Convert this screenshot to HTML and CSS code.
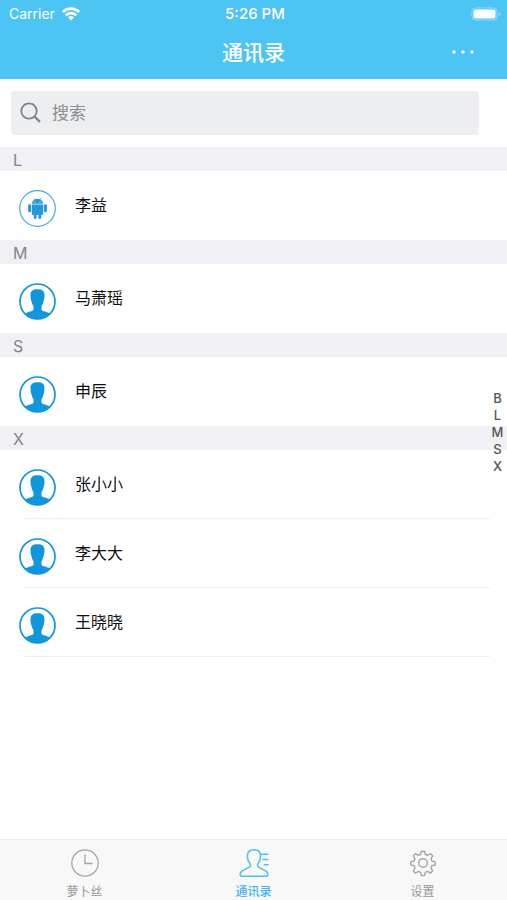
FILE: index.html
```html
<!DOCTYPE html>
<html lang="zh-CN">
<head>
<meta charset="utf-8">
<meta name="viewport" content="width=device-width, initial-scale=1">
<title>通讯录</title>
<link rel="stylesheet" href="styles.css">
</head>
<body>
<svg class="sprite" aria-hidden="true">
  <symbol id="person" viewBox="0 0 37 37">
    <circle cx="18.500" cy="18.500" r="17.500" fill="#fff" stroke="#1296db" stroke-width="1.700"/>
    <path fill="#1296db" d="M18.500 6.200c-4.800 0-7 1.800-7 5.800 0 1.500.1 2.700.3 4 .2 1 .3 1.700.7 2.300.3 1.900 1 3.600 2 4.900v3c-.1 1.200-1 1.700-2.400 2.100-2.600.7-5 1.400-6.600 2.700C8.800 34.400 13.400 36.200 18.500 36.200s9.700-1.800 13-5.200c-1.600-1.300-4-2-6.600-2.700-1.400-.4-2.300-.9-2.400-2.100v-3c1-1.300 1.700-3 2-4.900.4-.6.5-1.300.7-2.300.2-1.300.3-2.500.3-4 0-4-2.200-5.800-7-5.800z"/>
  </symbol>
</svg>
<div class="app">
  <header class="header">
    <div class="status">
      <div class="carrier">
        <span>Carrier</span>
        <svg width="18" height="14" viewBox="0 0 18 14" fill="none" stroke="#fff" stroke-width="2.600" aria-hidden="true">
          <path d="M.8 5a11.600 11.600 0 0 1 16.400 0M3.700 8.300a7.500 7.500 0 0 1 10.600 0"/>
          <path d="M9 13.500l-2.900-3a4.100 4.100 0 0 1 5.800 0z" fill="#fff" stroke="none"/>
        </svg>
      </div>
      <time class="clock">5:26 PM</time>
      <svg class="battery" width="30" height="14" viewBox="0 0 30 14" aria-hidden="true">
        <rect x="1" y="1" width="25" height="12" rx="3.500" fill="none" stroke="#fff" stroke-opacity=".4"/>
        <rect x="2.500" y="2.500" width="22" height="9" rx="2" fill="#fff"/>
        <path d="M28 5v4q1.500-.6 1.500-2T28 5z" fill="#fff" fill-opacity=".4"/>
      </svg>
    </div>
    <div class="navbar">
      <h1 class="title">通讯录</h1>
      <button class="more" type="button" aria-label="更多">
        <svg width="24" height="6" viewBox="0 0 24 6" fill="#fff" aria-hidden="true"><circle cx="3" cy="3" r="1.700"/><circle cx="12" cy="3" r="1.700"/><circle cx="21" cy="3" r="1.700"/></svg>
      </button>
    </div>
  </header>

  <main class="content">
    <label class="search">
      <svg width="22" height="22" viewBox="0 0 22 22" fill="none" stroke="#808286" aria-hidden="true">
        <circle cx="9" cy="9" r="7.700" stroke-width="1.800"/><path d="M14.500 14.500l5.500 5.500" stroke-width="2.300"/>
      </svg>
      <input type="search" placeholder="搜索" aria-label="搜索">
    </label>

    <section>
      <h2 class="letter" id="L">L</h2>
      <ul class="contacts">
        <li class="contact">
          <svg class="avatar" viewBox="0 0 37 37" aria-hidden="true">
            <circle cx="18.500" cy="18.500" r="17.800" fill="#fff" stroke="#46a9df" stroke-width="1.200"/>
            <g fill="#2498db">
              <path d="M13 13.700c.1-2.200 1-3.400 2.700-4.200l-.8-1.300.4-.2.900 1.300c1.500-.5 3.100-.5 4.600 0l.9-1.300.4.200-.8 1.300c1.700.8 2.600 2 2.700 4.200z"/>
              <path d="M12.800 14.400h11.400v9.400q0 1.200-1.200 1.200h-.8v2.700a1.400 1.400 0 0 1-2.800 0V25h-1.800v2.700a1.400 1.400 0 0 1-2.800 0V25H14q-1.200 0-1.200-1.200z"/>
              <rect x="9.100" y="14.300" width="3" height="8" rx="1.400"/>
              <rect x="24.900" y="14.300" width="3" height="8" rx="1.400"/>
            </g>
            <circle cx="16" cy="11.800" r=".6" fill="#fff"/><circle cx="21" cy="11.800" r=".6" fill="#fff"/>
          </svg>
          <span class="name">李益</span>
        </li>
      </ul>
    </section>
    <section>
      <h2 class="letter" id="M">M</h2>
      <ul class="contacts">
        <li class="contact"><svg class="avatar" aria-hidden="true"><use href="#person"/></svg><span class="name">马萧瑶</span></li>
      </ul>
    </section>
    <section>
      <h2 class="letter" id="S">S</h2>
      <ul class="contacts">
        <li class="contact"><svg class="avatar" aria-hidden="true"><use href="#person"/></svg><span class="name">申辰</span></li>
      </ul>
    </section>
    <section>
      <h2 class="letter" id="X">X</h2>
      <ul class="contacts divided">
        <li class="contact"><svg class="avatar" aria-hidden="true"><use href="#person"/></svg><span class="name">张小小</span></li>
        <li class="contact"><svg class="avatar" aria-hidden="true"><use href="#person"/></svg><span class="name">李大大</span></li>
        <li class="contact"><svg class="avatar" aria-hidden="true"><use href="#person"/></svg><span class="name">王晓晓</span></li>
      </ul>
    </section>
  </main>

  <nav class="index" aria-label="字母索引">
    <a href="#B">B</a><a href="#L">L</a><a href="#M">M</a><a href="#S">S</a><a href="#X">X</a>
  </nav>

  <nav class="tabs">
    <a class="tab" href="#recent">
      <svg width="30" height="30" viewBox="0 0 30 30" fill="none" stroke="#a3a5a7" stroke-width="1.300" aria-hidden="true"><circle cx="15" cy="15" r="13.200"/><path d="M15 6.500V15.500h7.500"/></svg>
      <span>萝卜丝</span>
    </a>
    <a class="tab active" href="#contacts" aria-current="page">
      <svg width="30" height="30" viewBox="0 0 30 30" fill="none" stroke="#4fbdf0" stroke-width="1.500" stroke-linecap="round" stroke-linejoin="round" aria-hidden="true">
        <path d="M15 1.700c-4.200 0-6.600 2.600-6.600 6.600 0 3 .9 5.400 2.500 7.100 1 1.200.9 2.600-.4 3.500-2.200 1.600-5 2.600-7.500 4.300-1.500 1-2 2-1.900 3.500.1 1 .7 1.500 1.700 1.500h24.400c1 0 1.600-.5 1.700-1.500.1-1.500-.4-2.500-1.900-3.500-2.500-1.700-5.300-2.700-7.500-4.300-1.300-.9-1.400-2.300-.4-3.500 1.600-1.700 2.500-4.100 2.500-7.100 0-4-2.400-6.600-6.600-6.600z"/>
        <path d="M22.500 6.200h6.300M24 11.500h4.800M25.500 16.800h3.300"/>
      </svg>
      <span>通讯录</span>
    </a>
    <a class="tab" href="#settings">
      <svg width="30" height="30" viewBox="0 0 30 30" fill="none" stroke="#a3a5a7" stroke-width="1.400" stroke-linejoin="round" aria-hidden="true">
        <circle cx="15" cy="15" r="4.300"/>
        <path d="M12.600 6.500 13.500 3.200h3l.9 3.300 2.200.9 3-1.700 2.100 2.100-1.700 3 .9 2.200 3.300.9v3l-3.300.9-.9 2.200 1.700 3-2.100 2.100-3-1.700-2.200.9-.9 3.300h-3l-.9-3.300-2.200-.9-3 1.700-2.100-2.100 1.700-3-.9-2.200-3.300-.9v-3l3.300-.9.9-2.200-1.700-3 2.100-2.100 3 1.700z"/>
      </svg>
      <span>设置</span>
    </a>
  </nav>
</div>
</body>
</html>
```
FILE: styles.css
```css
* { box-sizing: border-box; }

body {
  margin: 0;
  background: #fff;
  color: #111;
  font-family: Inter, "Noto Sans CJK SC", sans-serif;
}

h1, h2, ul { margin: 0; padding: 0; font-weight: 400; }
ul { list-style: none; }
a { color: inherit; text-decoration: none; }
svg { display: block; flex: none; }
.sprite { position: absolute; width: 0; height: 0; }

.app {
  position: relative;
  display: flex;
  flex-direction: column;
  min-height: 100vh;
}

.header {
  height: 79px;
  background: #4dc5f4;
  color: #fff;
}

.status, .navbar {
  display: grid;
  grid-template-columns: 1fr auto 1fr;
  align-items: center;
}

.status {
  height: 27px;
  padding: 0 6px 0 9px;
  font-size: 14px;
}
.carrier { display: flex; align-items: center; gap: 7px; }
.clock { font-size: 15px; font-weight: 500; }
.battery { justify-self: end; }

.navbar { height: 52px; padding: 0 32px; }
.title { grid-column: 2; font-size: 21px; line-height: 32px; font-weight: 500; }
.more {
  justify-self: end;
  padding: 8px 0 10px;
  border: 0;
  background: none;
}

.content { flex: 1; }

.search {
  display: flex;
  align-items: center;
  gap: 10px;
  height: 44px;
  margin: 12px 28px 12px 11px;
  padding: 0 9px;
  border-radius: 4px;
  background: #edeef0;
}
.search input {
  flex: 1;
  min-width: 0;
  padding: 0;
  border: 0;
  outline: 0;
  background: none;
  font: inherit;
  font-size: 17px;
}
.search input::placeholder { color: #8c8e92; opacity: 1; }

.letter {
  height: 24px;
  padding-left: 13px;
  background: #f0f0f5;
  color: #858588;
  font-size: 16px;
  line-height: 26px;
}

.contact {
  position: relative;
  display: flex;
  align-items: flex-start;
  gap: 19px;
  height: 69px;
  padding: 19px 19px 0;
}
.divided .contact::after {
  content: "";
  position: absolute;
  right: 17px;
  bottom: 0;
  left: 24px;
  height: 1px;
  background: #f0f0f0;
}
.avatar { width: 37px; height: 37px; }
.name { font-size: 16px; line-height: 30px; }

.index {
  position: absolute;
  top: 48%;
  right: 2px;
  display: flex;
  flex-direction: column;
  width: 15px;
  color: #555;
  font-size: 13px;
  font-weight: 500;
  line-height: 17px;
  text-align: center;
  transform: translateY(-50%);
}

.tabs {
  display: grid;
  grid-template-columns: repeat(3, 1fr);
  height: 61px;
  padding-top: 8px;
  border-top: 1px solid #ececec;
  background: #f8f8f8;
}
.tab {
  display: flex;
  flex-direction: column;
  align-items: center;
  gap: 5px;
  color: #97999b;
  font-size: 12px;
  line-height: 18px;
}
.active { color: #3eb5ed; font-weight: 500; }
```
